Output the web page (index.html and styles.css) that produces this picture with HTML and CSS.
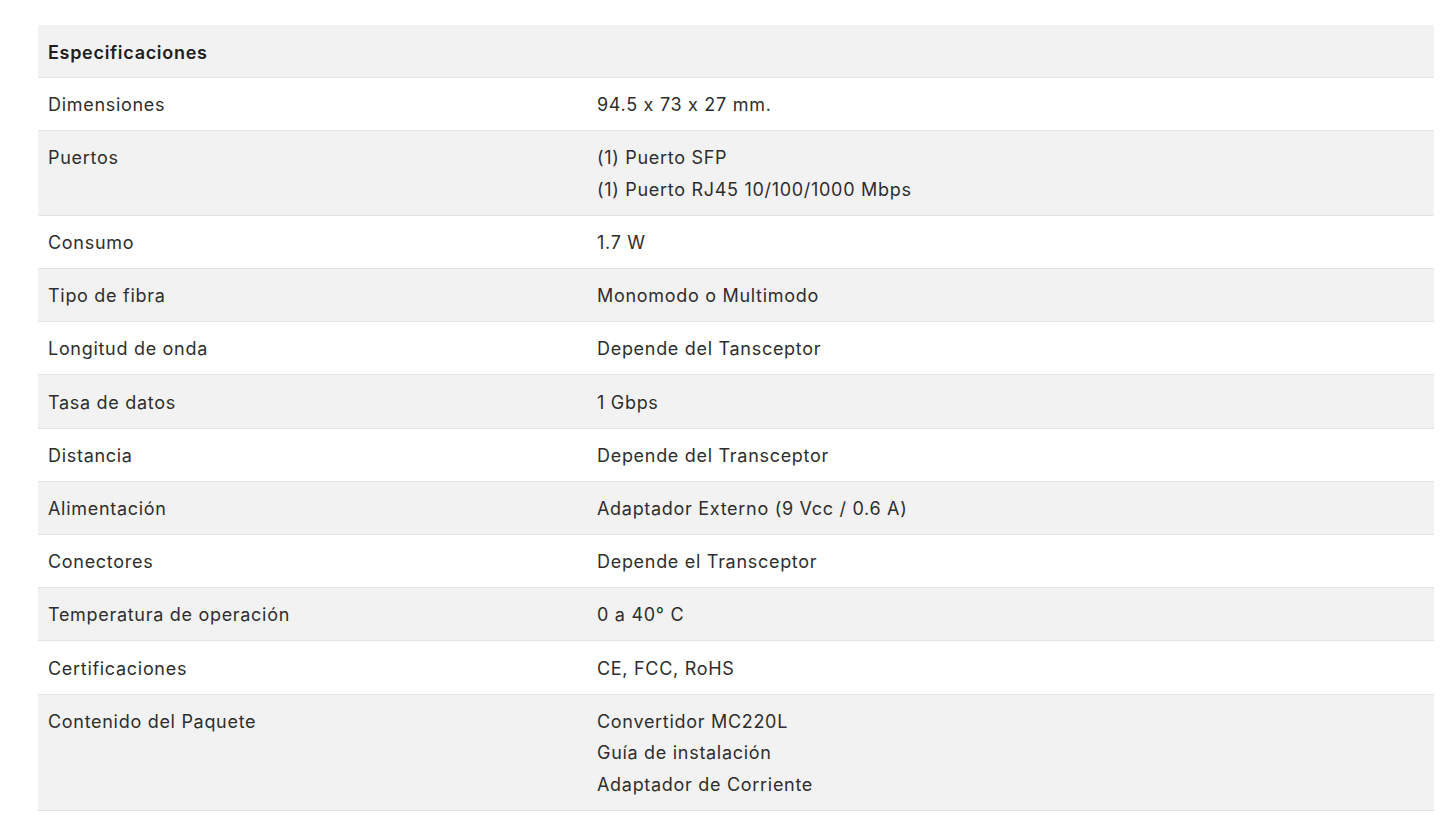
FILE: index.html
```html
<!DOCTYPE html>
<html lang="es">
<head>
<meta charset="utf-8">
<title>Especificaciones</title>
<link rel="stylesheet" href="styles.css">
</head>
<body>
<div class="page">
  <table class="specs">
    <thead>
      <tr><th colspan="2">Especificaciones</th></tr>
    </thead>
    <tbody>
      <tr><td class="k">Dimensiones</td><td>94.5 x 73 x 27 mm.</td></tr>
      <tr><td class="k">Puertos</td><td>(1) Puerto SFP<br>(1) Puerto RJ45 10/100/1000 Mbps</td></tr>
      <tr><td class="k">Consumo</td><td>1.7 W</td></tr>
      <tr><td class="k">Tipo de fibra</td><td>Monomodo o Multimodo</td></tr>
      <tr><td class="k">Longitud de onda</td><td>Depende del Tansceptor</td></tr>
      <tr><td class="k">Tasa de datos</td><td>1 Gbps</td></tr>
      <tr><td class="k">Distancia</td><td>Depende del Transceptor</td></tr>
      <tr><td class="k">Alimentación</td><td>Adaptador Externo (9 Vcc / 0.6 A)</td></tr>
      <tr><td class="k">Conectores</td><td>Depende el Transceptor</td></tr>
      <tr><td class="k">Temperatura de operación</td><td>0 a 40° C</td></tr>
      <tr><td class="k">Certificaciones</td><td>CE, FCC, RoHS</td></tr>
      <tr><td class="k">Contenido del Paquete</td><td>Convertidor MC220L<br>Guía de instalación<br>Adaptador de Corriente</td></tr>
    </tbody>
  </table>
</div>
</body>
</html>
```

FILE: styles.css
```css
html, body {
  margin: 0;
  padding: 0;
  background: #ffffff;
}
.page {
  padding: 25px 16px 0 38px;
  font-family: "Inter", "Noto Sans", sans-serif;
  font-feature-settings: "calt" 0;
  color: #2e2e2e;
}
.specs {
  width: 1396px;
  border-collapse: collapse;
  font-size: 18px;
  letter-spacing: 0.7px;
  line-height: 31.5px;
}
.specs th {
  text-align: left;
  font-weight: 600;
  background: #f2f2f2;
  color: #1f1f1f;
  padding: 11.5px 10px 9px;
  border-bottom: 1px solid #e3e3e3;
}
.specs td {
  vertical-align: top;
  font-weight: 400;
  padding: 11.2px 10px 9.5px;
  border-bottom: 1px solid #e3e3e3;
}
.specs td.k {
  width: 529px;
}
.specs tbody tr:nth-child(even) td {
  background: #f2f2f2;
}
```
